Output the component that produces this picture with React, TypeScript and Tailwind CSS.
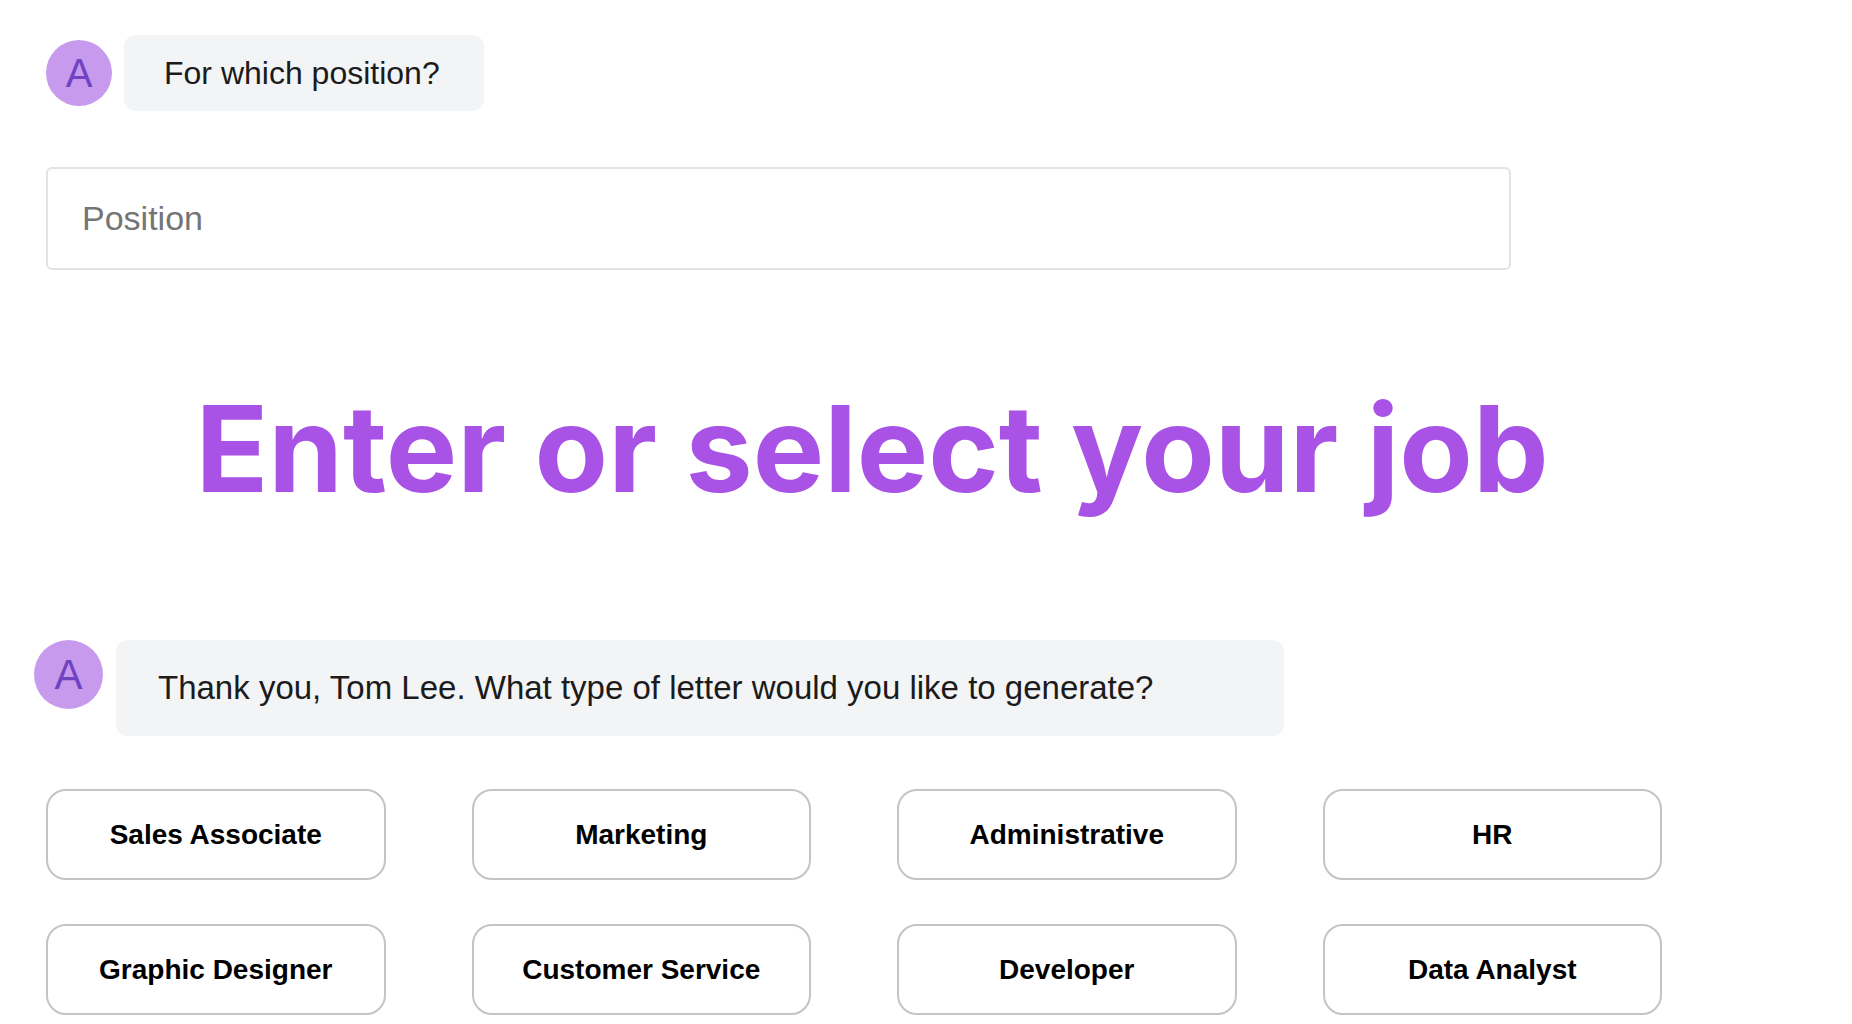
const jobs = [
  'Sales Associate',
  'Marketing',
  'Administrative',
  'HR',
  'Graphic Designer',
  'Customer Service',
  'Developer',
  'Data Analyst',
];

export default function App() {
  return (
    <main className="bg-white pb-2 pl-[46px] pr-6 pt-[35px] font-['Liberation_Sans',Arial,sans-serif] text-[#1b1b1b]">
      <div className="flex items-center gap-3">
        <div className="flex size-[66px] shrink-0 items-center justify-center rounded-full bg-[#c79aed] text-[40px] text-[#6f42c1]">
          A
        </div>
        <p className="rounded-xl bg-[#f2f4f6] py-5 pl-10 pr-11 text-[32px] leading-9">
          <label htmlFor="position">For which position?</label>
        </p>
      </div>

      <input
        id="position"
        type="text"
        placeholder="Position"
        className="mt-14 block h-[103px] w-full max-w-[1465px] rounded-md border-2 border-[#e2e2e2] px-[34px] text-[34px] placeholder:text-[#757575]"
      />

      <h1 className="mt-[107px] max-w-[1652px] text-center font-['Inter',sans-serif] text-[120px] font-bold leading-[144px] text-[#a853e5]">
        Enter or select your job
      </h1>

      <div className="-ml-3 mt-[119px] flex items-start gap-[13px]">
        <div className="flex size-[69px] shrink-0 items-center justify-center rounded-full bg-[#c79aed] text-[42px] text-[#6f42c1]">
          A
        </div>
        <p className="w-full max-w-[1168px] rounded-xl bg-[#f2f4f6] px-[42px] py-7 text-[33px] leading-10">
          Thank you, Tom Lee. What type of letter would you like to generate?
        </p>
      </div>

      <div className="mt-[53px] grid max-w-[1616px] grid-cols-4 gap-x-[86px] gap-y-11">
        {jobs.map((job) => (
          <button
            key={job}
            type="button"
            className="h-[91px] rounded-[20px] border-2 border-[#c4c4c4] bg-white text-[28px] font-bold text-black"
          >
            {job}
          </button>
        ))}
      </div>
    </main>
  );
}
